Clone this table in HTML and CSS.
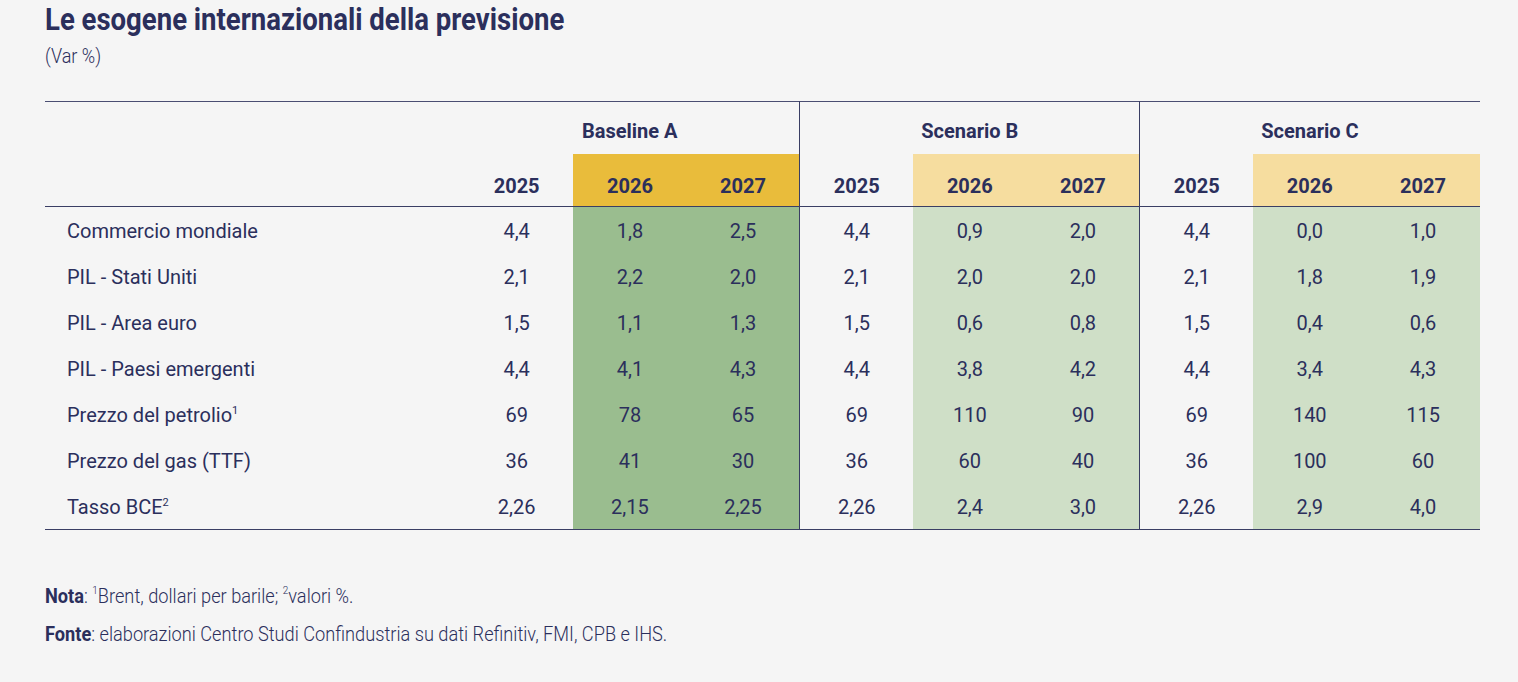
FILE: index.html
```html
<!DOCTYPE html>
<html lang="it">
<head>
<meta charset="utf-8">
<title>Le esogene internazionali della previsione</title>
<link rel="stylesheet" href="styles.css">
</head>
<body>
<div class="page">
  <h1 class="title"><span class="cond">Le esogene internazionali della previsione</span></h1>
  <p class="subtitle"><span class="cond-light">(Var %)</span></p>
  <table class="data">
    <colgroup>
      <col class="c-label">
      <col class="c-num"><col class="c-num"><col class="c-num">
      <col class="c-num"><col class="c-num"><col class="c-num">
      <col class="c-num"><col class="c-num"><col class="c-num">
    </colgroup>
    <thead>
      <tr class="group-row">
        <th></th>
        <th colspan="3" class="grp">Baseline A</th>
        <th colspan="3" class="grp sep">Scenario B</th>
        <th colspan="3" class="grp sep">Scenario C</th>
      </tr>
      <tr class="year-row">
        <th></th>
        <th>2025</th>
        <th class="hA">2026</th>
        <th class="hA">2027</th>
        <th class="sep">2025</th>
        <th class="hS">2026</th>
        <th class="hS">2027</th>
        <th class="sep">2025</th>
        <th class="hS">2026</th>
        <th class="hS">2027</th>
      </tr>
    </thead>
    <tbody>
      <tr>
        <td class="lbl">Commercio mondiale</td>
        <td>4,4</td><td class="dA">1,8</td><td class="dA">2,5</td>
        <td class="sep">4,4</td><td class="dS">0,9</td><td class="dS">2,0</td>
        <td class="sep">4,4</td><td class="dS">0,0</td><td class="dS">1,0</td>
      </tr>
      <tr>
        <td class="lbl">PIL - Stati Uniti</td>
        <td>2,1</td><td class="dA">2,2</td><td class="dA">2,0</td>
        <td class="sep">2,1</td><td class="dS">2,0</td><td class="dS">2,0</td>
        <td class="sep">2,1</td><td class="dS">1,8</td><td class="dS">1,9</td>
      </tr>
      <tr>
        <td class="lbl">PIL - Area euro</td>
        <td>1,5</td><td class="dA">1,1</td><td class="dA">1,3</td>
        <td class="sep">1,5</td><td class="dS">0,6</td><td class="dS">0,8</td>
        <td class="sep">1,5</td><td class="dS">0,4</td><td class="dS">0,6</td>
      </tr>
      <tr>
        <td class="lbl">PIL - Paesi emergenti</td>
        <td>4,4</td><td class="dA">4,1</td><td class="dA">4,3</td>
        <td class="sep">4,4</td><td class="dS">3,8</td><td class="dS">4,2</td>
        <td class="sep">4,4</td><td class="dS">3,4</td><td class="dS">4,3</td>
      </tr>
      <tr>
        <td class="lbl">Prezzo del petrolio<sup>1</sup></td>
        <td>69</td><td class="dA">78</td><td class="dA">65</td>
        <td class="sep">69</td><td class="dS">110</td><td class="dS">90</td>
        <td class="sep">69</td><td class="dS">140</td><td class="dS">115</td>
      </tr>
      <tr>
        <td class="lbl">Prezzo del gas (TTF)</td>
        <td>36</td><td class="dA">41</td><td class="dA">30</td>
        <td class="sep">36</td><td class="dS">60</td><td class="dS">40</td>
        <td class="sep">36</td><td class="dS">100</td><td class="dS">60</td>
      </tr>
      <tr>
        <td class="lbl">Tasso BCE<sup>2</sup></td>
        <td>2,26</td><td class="dA">2,15</td><td class="dA">2,25</td>
        <td class="sep">2,26</td><td class="dS">2,4</td><td class="dS">3,0</td>
        <td class="sep">2,26</td><td class="dS">2,9</td><td class="dS">4,0</td>
      </tr>
    </tbody>
  </table>
  <div class="notes">
    <p class="note"><span class="cond-note"><b>Nota</b>: <sup>1</sup>Brent, dollari per barile; <sup>2</sup>valori %.</span></p>
    <p class="note"><span class="cond-note"><b>Fonte</b>: elaborazioni Centro Studi Confindustria su dati Refinitiv, FMI, CPB e IHS.</span></p>
  </div>
</div>
</body>
</html>
```
FILE: styles.css
```css
html, body {
  margin: 0;
  padding: 0;
  background: #f5f5f5;
}
body {
  font-family: Roboto, "Liberation Sans", sans-serif;
  color: #2b2f5c;
}
.page {
  padding: 1px 39px 0 45px;
}
.title {
  margin: 0;
  font-size: 32px;
  line-height: 36px;
  font-weight: 700;
  color: #2b2f5c;
  white-space: nowrap;
}
.cond {
  display: inline-block;
  transform: scaleX(0.86);
  transform-origin: left center;
}
.cond-light {
  display: inline-block;
  transform: scaleX(0.86);
  transform-origin: left center;
  white-space: nowrap;
}
.cond-note {
  display: inline-block;
  transform: scaleX(0.91);
  transform-origin: left center;
  white-space: nowrap;
}
.subtitle {
  margin: 7px 0 0 0;
  font-size: 21px;
  line-height: 24px;
  font-weight: 300;
}
.data {
  margin-top: 33px;
  width: 1434px;
  border-collapse: collapse;
  table-layout: fixed;
  border-top: 1.5px solid #4a4e72;
  border-bottom: 1.5px solid #3a3e64;
}
.c-label { width: 415px; }
.c-num { width: 113.3px; }
.data th, .data td {
  padding: 0;
  text-align: center;
  font-size: 20px;
}
.data th {
  font-weight: 700;
}
.group-row th {
  height: 52px;
  padding-top: 7px;
  box-sizing: border-box;
  vertical-align: middle;
}
.year-row th {
  height: 53px;
  padding-top: 13px;
  box-sizing: border-box;
  border-bottom: 1.5px solid #3a3e64;
  vertical-align: middle;
}
.sep {
  border-left: 1.5px solid #3a3e64;
}
.hA { background: #e9bc3b; }
.hS { background: #f6dd9f; }
.dA { background: #9abd8f; }
.dS { background: #cfdfc7; }
.data td {
  height: 44px;
  padding-top: 2px;
  font-weight: 400;
}
.data td.lbl {
  text-align: left;
  padding-left: 22px;
}
sup {
  font-size: 11px;
  vertical-align: top;
  line-height: 1;
  position: relative;
  top: 2px;
}
.notes {
  margin-top: 54px;
}
.note {
  margin: 0 0 14px 0;
  font-size: 20px;
  line-height: 24px;
  font-weight: 300;
}
.note b {
  font-weight: 700;
}
.note sup {
  font-size: 11px;
  top: 1px;
}
```
